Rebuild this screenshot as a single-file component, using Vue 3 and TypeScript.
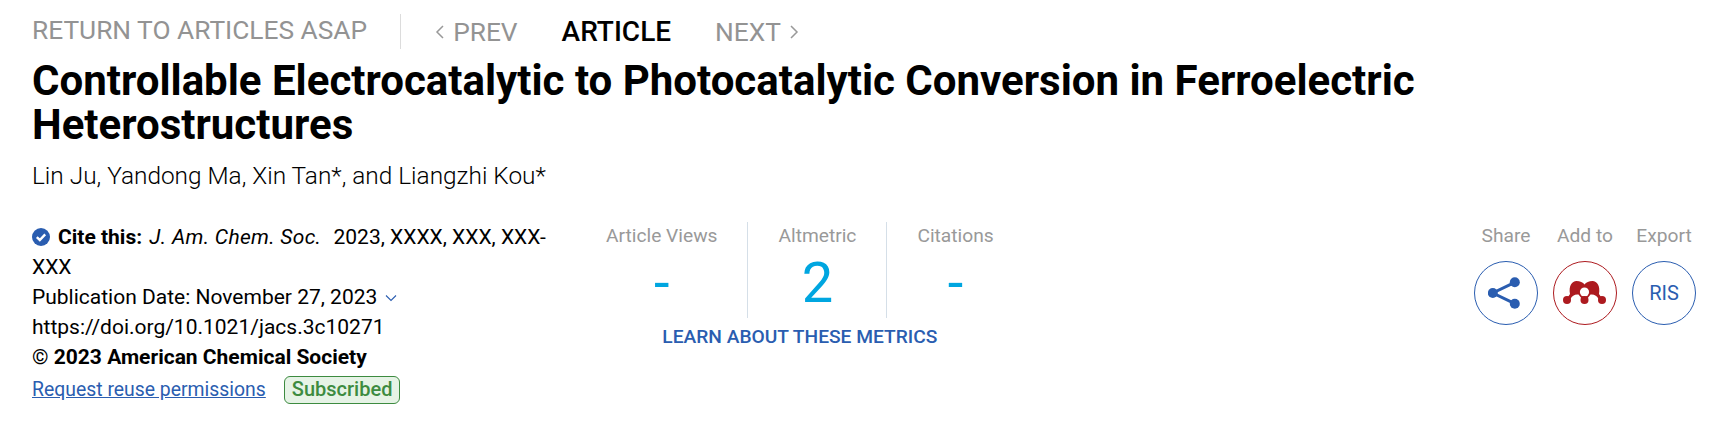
<script setup lang="ts">
const metrics = [
  { label: 'Article Views', value: '-' },
  { label: 'Altmetric', value: '2' },
  { label: 'Citations', value: '-' },
]
</script>

<template>
  <div class="page">
    <nav class="nav">
      <span class="return">RETURN TO ARTICLES ASAP</span>
      <span class="pager">
        <span class="muted">
          <svg width="9" height="16" viewBox="0 0 9 16"><path d="M8 2 L2 8 L8 14" fill="none" stroke="#999" stroke-width="1.5"/></svg>
          PREV
        </span>
        <span class="current">ARTICLE</span>
        <span class="muted">
          NEXT
          <svg width="9" height="16" viewBox="0 0 9 16"><path d="M1 2 L7 8 L1 14" fill="none" stroke="#999" stroke-width="1.5"/></svg>
        </span>
      </span>
    </nav>
    <h1 class="title">Controllable Electrocatalytic to Photocatalytic Conversion in Ferroelectric Heterostructures</h1>
    <p class="authors">Lin Ju, Yandong Ma, Xin Tan*, and Liangzhi Kou*</p>
    <div class="info">
      <div class="cite">
        <div class="cite-line">
          <svg class="check" width="18" height="18" viewBox="0 0 18 18"><circle cx="9" cy="9" r="9" fill="#2a5db0"/><path d="M4.8 9.2 L7.8 12 L13.2 6.4" fill="none" stroke="#fff" stroke-width="2.4"/></svg>
          <b class="cite-label">Cite this:</b> <i class="journal">J. Am. Chem. Soc.</i> <span>2023, XXXX, XXX, XXX-</span><span>XXX</span>
        </div>
        <div>Publication Date: November 27, 2023
          <svg class="down" width="12" height="8" viewBox="0 0 12 8"><path d="M1 1.5 L6 6.5 L11 1.5" fill="none" stroke="#2a5db0" stroke-width="1.1"/></svg>
        </div>
        <div>https://doi.org/10.1021/jacs.3c10271</div>
        <div>© <b>2023 American Chemical Society</b></div>
        <div class="reuse">
          <a class="link">Request reuse permissions</a>
          <span class="badge">Subscribed</span>
        </div>
      </div>
      <div class="metrics">
        <div class="metric-row">
          <div v-for="m in metrics" :key="m.label" class="metric">
            <div class="metric-label">{{ m.label }}</div>
            <div class="metric-value">{{ m.value }}</div>
          </div>
        </div>
        <a class="learn">LEARN ABOUT THESE METRICS</a>
      </div>
      <div class="actions">
        <div class="action">
          <div class="action-label">Share</div>
          <div class="circle blue">
            <svg width="36" height="36" viewBox="0 0 36 36">
              <path d="M26.8 7.3 L4.8 18 L26.8 28.7" fill="none" stroke="#2a5db0" stroke-width="3"/>
              <circle cx="26.8" cy="7.3" r="5" fill="#2a5db0"/>
              <circle cx="4.8" cy="18" r="5" fill="#2a5db0"/>
              <circle cx="26.8" cy="28.7" r="5" fill="#2a5db0"/>
            </svg>
          </div>
        </div>
        <div class="action">
          <div class="action-label">Add to</div>
          <div class="circle red">
            <svg width="44" height="26" viewBox="0 0 44 26">
              <path d="M7 14 C5.5 6 9 1 13.5 1 C17 1 20 2.5 21.5 4.5 C23 2.5 26 1 29.5 1 C34 1 37.5 6 36 14 L38 17 L35.5 19 C34 15.5 31 14 27.5 14.5 L24 19 L19 19 L15.5 14.5 C12 14 9 15.5 7.5 19 L5 17 Z" fill="#ad1a1f"/>
              <circle cx="21.5" cy="12" r="4.6" fill="#fff"/>
              <circle cx="4" cy="20" r="4" fill="#ad1a1f"/>
              <circle cx="21.5" cy="20" r="4" fill="#ad1a1f"/>
              <circle cx="39" cy="20" r="4" fill="#ad1a1f"/>
            </svg>
          </div>
        </div>
        <div class="action">
          <div class="action-label">Export</div>
          <div class="circle blue ris">RIS</div>
        </div>
      </div>
    </div>
  </div>
</template>

<style>
body { background: #fff; }
</style>

<style scoped>
.page {
  box-sizing: border-box;
  width: 1718px;
  height: 424px;
  padding: 14px 22px 0 32px;
  font-family: Roboto, "Liberation Sans", sans-serif;
  color: #000;
  overflow: hidden;
}
.nav {
  display: flex;
  align-items: center;
  height: 35px;
  font-size: 26.3px;
  font-weight: 400;
  color: #939393;
}
.return {
  padding-right: 33px;
  border-right: 1px solid #dcdcdc;
  height: 35px;
  line-height: 33px;
}
.pager {
  display: flex;
  align-items: center;
  gap: 44px;
  margin-left: 34px;
}
.muted { display: inline-flex; align-items: center; gap: 9px; }
.current { font-weight: 500; font-size: 28px; color: #000; }
.title {
  margin: 10px 0 0;
  font-size: 42px;
  line-height: 44px;
  font-weight: 700;
}
.authors {
  margin: 14px 0 0;
  font-size: 24.4px;
  line-height: 30px;
  font-weight: 300;
}
.info {
  display: flex;
  margin-top: 31px;
}
.cite {
  width: 524px;
  margin-right: 20px;
  font-size: 21px;
  line-height: 30px;
}
.check { vertical-align: -2px; margin-right: 8px; }
.cite-label { margin-right: 2px; }
.journal { letter-spacing: 0.3px; margin-right: 7px; }
.down { vertical-align: 2px; margin-left: 2px; }
.reuse { display: flex; align-items: center; gap: 18px; margin-top: 3px; }
.link { color: #2a5db0; text-decoration: underline; font-size: 19.4px; }
.badge {
  box-sizing: border-box;
  height: 28px;
  padding: 0 7px;
  border: 1.5px solid #3d8b40;
  border-radius: 6px;
  background: #e6f3e6;
  color: #3d8b40;
  font-weight: 500;
  font-size: 20px;
  line-height: 25px;
}
.metric-row { display: flex; }
.metric {
  height: 96px;
  padding: 0 30px;
  text-align: center;
  border-right: 1px solid #d5dfe8;
}
.metric:last-child { border-right: 0; }
.metric-label { font-size: 19.2px; line-height: 28px; color: #999; }
.metric-value { font-size: 56px; line-height: 66px; font-weight: 400; color: #00a6e0; }
.learn {
  display: block;
  margin-top: 7px;
  text-align: center;
  color: #2a5db0;
  font-size: 19.2px;
  font-weight: 500;
}
.actions {
  display: flex;
  gap: 15px;
  margin-left: auto;
}
.action { width: 64px; text-align: center; }
.action-label { font-size: 19.2px; line-height: 28px; color: #999; white-space: nowrap; }
.circle {
  box-sizing: border-box;
  width: 64px;
  height: 64px;
  margin-top: 11px;
  border-radius: 50%;
  display: flex;
  align-items: center;
  justify-content: center;
  border: 1px solid;
}
.blue { border-color: #2a5db0; color: #2a5db0; }
.red { border-color: #ad1a1f; }
.ris { font-size: 20px; }
</style>
